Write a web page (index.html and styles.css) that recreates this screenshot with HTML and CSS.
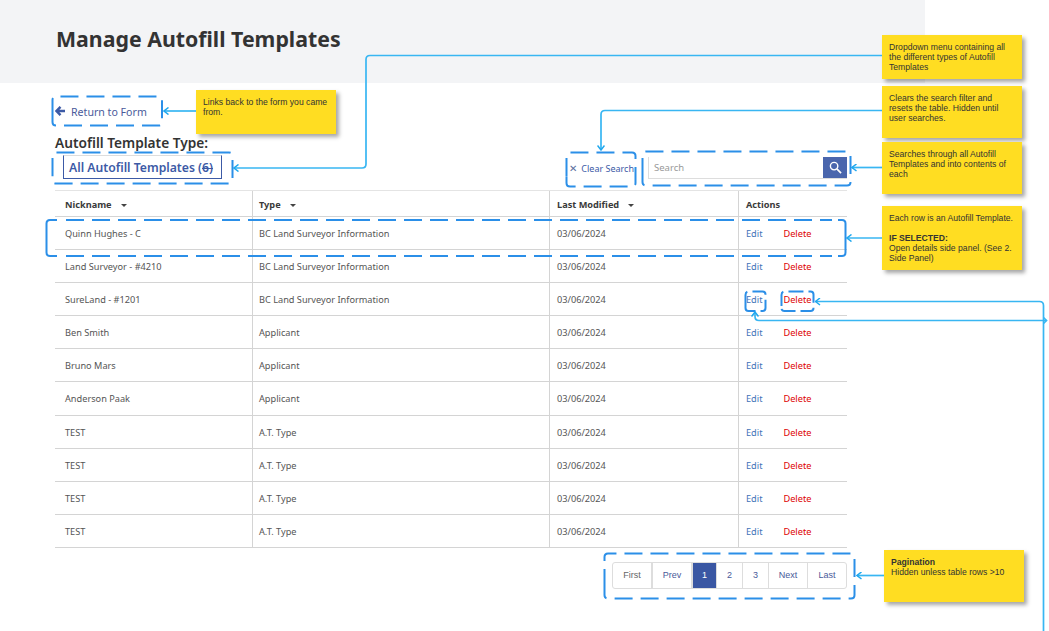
FILE: index.html
```html
<!DOCTYPE html>
<html lang="en">

<head>
    <meta charset="UTF-8">
    <meta name="viewport" content="width=device-width, initial-scale=1.0">
    <title>Manage Autofill Templates</title>
    <link rel="stylesheet" href="styles.css">
</head>

<body>
    <header class="page-header">
        <h1 class="heading">Manage Autofill Templates</h1>
    </header>

    <main class="content">
        <a class="return-link" href="#">
            <svg class="return-icon" viewBox="0 0 10 10" width="10" height="10">
                <path d="M5.500 .8 1.500 5l4 4.200M2 5h8" fill="none" stroke="#3c5aa6" stroke-width="2.400"/>
            </svg>
            Return to Form
        </a>

        <div class="toolbar">
            <div class="type-filter">
                <label class="type-label" for="templateType">Autofill Template Type:</label>
                <div class="type-select" id="templateType">All Autofill Templates (6)</div>
            </div>
            <div class="search-area">
                <a class="clear-search" href="#"><span class="clear-icon">&#x2715;</span>Clear Search</a>
                <div class="search-box">
                    <span class="search-input">Search</span>
                    <button class="search-button" type="button" aria-label="Search">
                        <svg viewBox="0 0 14 14" width="13" height="13">
                            <circle cx="5.500" cy="5.500" r="4" fill="none" stroke="#fff" stroke-width="1.500"/>
                            <path d="M8.500 8.500 13 13" stroke="#fff" stroke-width="1.800"/>
                        </svg>
                    </button>
                </div>
            </div>
        </div>

        <table class="data-table">
            <thead>
                <tr>
                    <th class="col-name">Nickname<span class="sort-caret"></span></th>
                    <th class="col-type">Type<span class="sort-caret"></span></th>
                    <th class="col-date">Last Modified<span class="sort-caret"></span></th>
                    <th>Actions</th>
                </tr>
            </thead>
            <tbody>
                <tr><td>Quinn Hughes - C</td><td>BC Land Surveyor Information</td><td>03/06/2024</td><td><a class="edit-link">Edit</a><a class="delete-link">Delete</a></td></tr>
                <tr><td>Land Surveyor - #4210</td><td>BC Land Surveyor Information</td><td>03/06/2024</td><td><a class="edit-link">Edit</a><a class="delete-link">Delete</a></td></tr>
                <tr><td>SureLand - #1201</td><td>BC Land Surveyor Information</td><td>03/06/2024</td><td><a class="edit-link">Edit</a><a class="delete-link">Delete</a></td></tr>
                <tr><td>Ben Smith</td><td>Applicant</td><td>03/06/2024</td><td><a class="edit-link">Edit</a><a class="delete-link">Delete</a></td></tr>
                <tr><td>Bruno Mars</td><td>Applicant</td><td>03/06/2024</td><td><a class="edit-link">Edit</a><a class="delete-link">Delete</a></td></tr>
                <tr><td>Anderson Paak</td><td>Applicant</td><td>03/06/2024</td><td><a class="edit-link">Edit</a><a class="delete-link">Delete</a></td></tr>
                <tr><td>TEST</td><td>A.T. Type</td><td>03/06/2024</td><td><a class="edit-link">Edit</a><a class="delete-link">Delete</a></td></tr>
                <tr><td>TEST</td><td>A.T. Type</td><td>03/06/2024</td><td><a class="edit-link">Edit</a><a class="delete-link">Delete</a></td></tr>
                <tr><td>TEST</td><td>A.T. Type</td><td>03/06/2024</td><td><a class="edit-link">Edit</a><a class="delete-link">Delete</a></td></tr>
                <tr><td>TEST</td><td>A.T. Type</td><td>03/06/2024</td><td><a class="edit-link">Edit</a><a class="delete-link">Delete</a></td></tr>
            </tbody>
        </table>

        <nav class="pagination">
            <a class="page-item page-first">First</a>
            <a class="page-item page-prev">Prev</a>
            <a class="page-item page-num active">1</a>
            <a class="page-item page-num">2</a>
            <a class="page-item page-num">3</a>
            <a class="page-item page-next">Next</a>
            <a class="page-item page-last">Last</a>
        </nav>
    </main>

    <!-- annotation layer: dashed outlines and connectors over the mockup -->
    <svg class="markup" viewBox="0 0 1049 631" width="1049" height="631">
        <defs>
            <marker id="head" markerWidth="7" markerHeight="8" refX="6" refY="4" orient="auto" markerUnits="userSpaceOnUse">
                <path d="M1.500 .5 6 4 1.500 7.500" fill="none" stroke="#1ea7ee" stroke-width="1.500"/>
            </marker>
        </defs>
        <g class="outlines">
            <path d="M52.500 116v-16q0-3.500 3.500-3.500h103q3 0 3 3v23q0 3-3 3H56q-3.500 0-3.500-3.500z"/>
            <path d="M52.500 176v-20q0-3.500 3.500-3.500h173q3.500 0 3.500 3.500v24q0 3.500-3.500 3.500H56q-3.500 0-3.500-3.500z"/>
            <path d="M566.500 176v-20q0-3.500 3.500-3.500h62q3.500 0 3.500 3.500v27q0 3.500-3.500 3.500h-62q-3.500 0-3.500-3.500z"/>
            <path d="M642.500 176v-21q0-3.500 3.500-3.500h201q3.500 0 3.500 3.500v27q0 3.500-3.500 3.500H646q-3.500 0-3.500-3.500z"/>
            <path d="M66 220h766"/>
            <path d="M66 256h766"/>
            <path d="M745.500 306v-11q0-3.500 3.500-3.500h13.500q3 0 3 3v13.500q0 3-3 3h-14q-3 0-3-3z" class="outline-small"/>
            <path d="M781.500 306v-11q0-3.500 3.500-3.500h25.500q3 0 3 3v13.500q0 3-3 3h-26q-3 0-3-3z" class="outline-small"/>
            <path d="M604.500 587v-30q0-3.500 3.500-3.500h243q3.500 0 3.500 3.500v38q0 3.500-3.500 3.500H608q-3.500 0-3.500-3.500z"/>
            <path class="outline-solid" d="M57 220h-7q-3.500 0-3.500 3.500v29q0 3.500 3.500 3.500h7"/>
            <path class="outline-solid" d="M838 220h4q3.500 0 3.500 3.500v29q0 3.500-3.500 3.500h-4"/>
        </g>
        <g class="connectors">
            <path d="M882 55.500H370q-4 0-4 4V164q0 4-4 4H234" marker-end="url(#head)"/>
            <path d="M882 110.500H605q-4 0-4 4V150" marker-end="url(#head)"/>
            <path d="M882 167.500H852" marker-end="url(#head)"/>
            <path d="M882 238H847" marker-end="url(#head)"/>
            <path d="M196 111H164" marker-end="url(#head)"/>
            <path d="M884 575.500H857" marker-end="url(#head)"/>
            <path d="M1043.500 631V305.500q0-4-4-4H815.500" marker-end="url(#head)"/>
            <path d="M1046.500 320.500H759q-4 0-4-4V312" marker-end="url(#head)"/>
            <path d="M1043.500 317.500l3 3-3 3"/>
        </g>
    </svg>

    <p class="note note-return">Links back to the form you came from.</p>
    <p class="note note-type">Dropdown menu containing all the different types of Autofill Templates</p>
    <p class="note note-clear">Clears the search filter and resets the table. Hidden until user searches.</p>
    <p class="note note-search">Searches through all Autofill Templates and into contents of each</p>
    <p class="note note-row">Each row is an Autofill Template.<br><br><b>IF SELECTED:</b><br>Open details side panel. (See 2. Side Panel)</p>
    <p class="note note-pages"><b>Pagination</b><br>Hidden unless table rows &gt;10</p>
</body>

</html>
```

FILE: styles.css
```css
html,
body {
    margin: 0;
    padding: 0;
    height: 631px;
    overflow: hidden;
}

body {
    position: relative;
    font-family: "Noto Sans", Arial, sans-serif;
    background-color: #fff;
    color: #3a3a3a;
}

.page-header {
    width: 869px;
    height: 83px;
    padding-left: 56px;
    background-color: #f3f4f6;
    display: flex;
    align-items: center;
}

.heading {
    margin: 0 0 7px;
    font-size: 21.3px;
    font-weight: 700;
    color: #333;
}

.content {
    width: 792px;
    margin-left: 55px;
}

.return-link {
    display: flex;
    align-items: center;
    height: 28px;
    margin-top: 13px;
    padding-top: 2px;
    font-size: 10.6px;
    color: #4a5a9a;
    text-decoration: none;
}

.return-icon {
    margin: 0 6px 2px 0;
}

.toolbar {
    display: flex;
    justify-content: space-between;
    align-items: flex-end;
    height: 66px;
    margin-top: -2px;
    padding-bottom: 11px;
    box-sizing: border-box;
}

.type-filter {
    display: flex;
    flex-direction: column;
}

.type-label {
    font-size: 13.7px;
    font-weight: 600;
    line-height: 18px;
    color: #333;
}

.type-select {
    position: relative;
    width: 157px;
    height: 22px;
    margin: 3px 0 0 8px;
    border: 1px solid #3c5aa6;
    border-top: 1px solid #ddd;
    font-size: 12.2px;
    font-weight: 600;
    line-height: 24px;
    text-indent: 5px;
    color: #3c5aa6;
}

/* dropdown caret, it sits on top of the count in the mockup */
.type-select::after {
    content: "";
    position: absolute;
    top: 12px;
    right: 8px;
    width: 11px;
    height: 1px;
    background-color: #3c5aa6;
}

.search-area {
    display: flex;
    align-items: center;
}

.clear-search {
    font-size: 9px;
    color: #3c5aa6;
    text-decoration: none;
    margin-right: 14px;
}

.clear-icon {
    margin-right: 4px;
    font-size: 10px;
    color: #5b6f9e;
}

.search-box {
    display: flex;
    width: 198px;
    height: 21px;
    border: 1px solid #ddd;
    border-width: 0 0 1px 1px;
}

.search-input {
    flex: 1;
    padding-left: 5px;
    font-size: 9.5px;
    line-height: 21px;
    color: #999;
}

.search-button {
    width: 24px;
    padding: 0;
    border: none;
    background-color: #4a66ad;
    display: flex;
    align-items: center;
    justify-content: center;
}

.data-table {
    width: 792px;
    border-collapse: collapse;
    table-layout: fixed;
    font-size: 9.2px;
}

.data-table th,
.data-table td {
    padding: 0 0 0 7px;
    border-bottom: 1px solid #d4d4d4;
    border-left: 1px solid #d4d4d4;
    text-align: left;
}

.data-table td {
    height: 31.3px;
    padding-top: .8px;
    color: #555;
}

.data-table th {
    height: 24px;
    padding-top: 1px;
    border-top: 1px solid #e4e4e4;
    font-weight: 700;
    color: #3a3a3a;
}

.data-table th:first-child,
.data-table td:first-child {
    border-left: none;
    padding-left: 10px;
}

.data-table th:nth-child(2),
.data-table td:nth-child(2) {
    padding-left: 6px;
}

.col-name {
    width: 187px;
}

.col-type {
    width: 290px;
}

.col-date {
    width: 181px;
}

.sort-caret {
    display: inline-block;
    margin: 0 0 1px 9px;
    border: 3px solid transparent;
    border-top: 3px solid #444;
    border-bottom: none;
}

.edit-link {
    color: #3f73b8;
    margin: 0 21px 0 0;
}

.delete-link {
    color: #dd0000;
}

.pagination {
    display: flex;
    width: 233px;
    height: 25px;
    margin: 14px 0 0 auto;
    border: 1px solid #ddd;
    border-radius: 3px;
    font-family: "Liberation Sans", Arial, sans-serif;
    font-size: 9px;
}

.page-item {
    display: flex;
    align-items: center;
    justify-content: center;
    border-left: 1px solid #ddd;
    color: #4a5a9a;
}

.page-first {
    width: 38px;
    border-left: none;
    color: #666;
}

.page-prev {
    width: 38px;
    border-left-width: 2px;
}

.page-num {
    width: 25px;
}

.page-next {
    width: 38px;
}

.page-last {
    flex: 1;
}

.page-item.active {
    width: 23px;
    border-left: 2px solid #ddd;
    background-color: #3a57a3;
    color: #fff;
}

.markup {
    position: absolute;
    top: 0;
    left: 0;
}

.outlines path {
    fill: none;
    stroke: #2b8fe8;
    stroke-width: 2;
    stroke-dasharray: 18 8;
}

.outlines .outline-small {
    stroke-dasharray: 15 5;
}

.outlines .outline-solid {
    stroke-dasharray: none;
}

.connectors path {
    fill: none;
    stroke: #38b6f2;
    stroke-width: 1.700;
}

.note {
    position: absolute;
    width: 140px;
    margin: 0;
    padding: 7px;
    box-sizing: border-box;
    background-color: #ffdd22;
    box-shadow: 3px 3px 4px rgba(0, 0, 0, 0.35);
    font-family: "Liberation Sans", Arial, sans-serif;
    font-size: 8.65px;
    line-height: 10px;
    color: #333;
}

.note-return {
    top: 90px;
    left: 196px;
    height: 44px;
}

.note-type {
    top: 35px;
    left: 882px;
    height: 44px;
}

.note-clear {
    top: 86px;
    left: 882px;
    height: 52px;
}

.note-search {
    top: 142px;
    left: 882px;
    height: 52px;
}

.note-row {
    top: 206px;
    left: 882px;
    height: 64px;
}

.note-pages {
    top: 550px;
    left: 884px;
    height: 52px;
}
```
